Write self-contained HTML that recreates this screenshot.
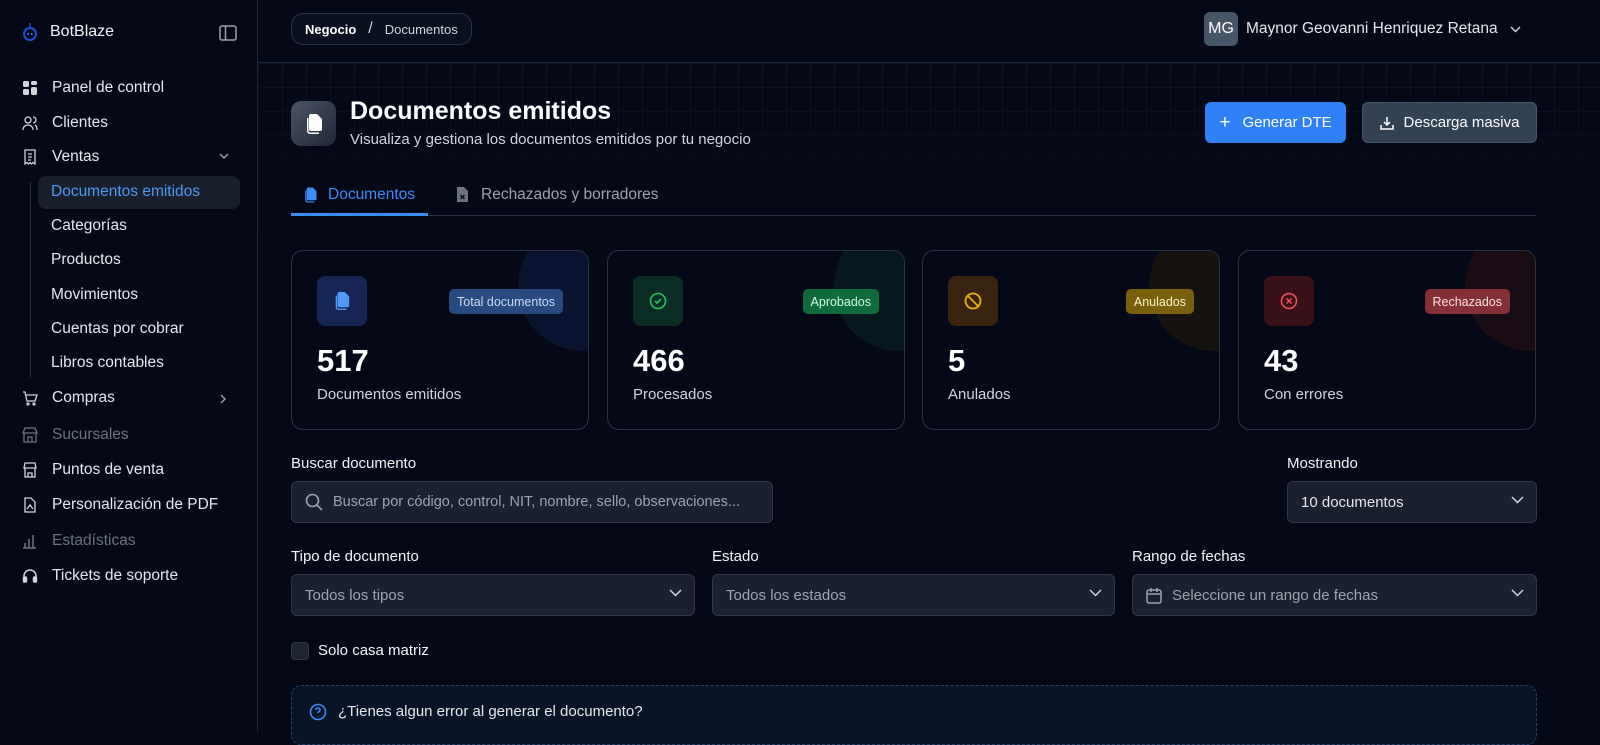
<!DOCTYPE html>
<html><head><meta charset="utf-8"><style>
*{box-sizing:border-box;margin:0;padding:0}
body{width:1600px;height:732px;overflow:hidden;background:#050817;font-family:"Liberation Sans",sans-serif;color:#e5e7eb;position:relative}
.sb{position:absolute;left:0;top:0;width:258px;height:732px;border-right:1px solid #1f2737;background:#050817}
.logo{position:absolute;left:22px;top:22px;display:flex;align-items:center;gap:12px;font-size:16px;color:#f3f4f6}
.nav{position:absolute;left:0;top:70px;width:258px}
.it{position:absolute;left:22px;display:flex;align-items:center;gap:14px;font-size:15.5px;color:#e5e7eb;height:24px}
.it svg{width:16px;height:16px}
.sub{position:absolute;left:51px;font-size:15.5px;color:#e5e7eb}
.dim{color:#6b7280}
.main{position:absolute;left:258px;top:0;right:0;height:732px}
.hdr{height:63px;border-bottom:1px solid #1f2a3d;position:relative}
.grid{position:absolute;left:0;top:63px;right:0;height:180px;background-image:linear-gradient(#0f1526 1px,transparent 1px),linear-gradient(90deg,#0f1526 1px,transparent 1px);background-size:24px 24px;opacity:.9;-webkit-mask-image:linear-gradient(#000,transparent)}
.bc{position:absolute;left:33px;top:13px;height:32px;border:1px solid #2a3346;border-radius:12px;background:#0b1020;padding:0 13px;display:flex;align-items:center;gap:12px;font-size:13px;color:#d1d5db}
.card{position:absolute;top:250px;width:298px;height:180px;border:1px solid #2b3447;border-radius:12px;overflow:hidden;background:#050817}
.card .circ{position:absolute;right:-60px;top:-30px;width:130px;height:130px;border-radius:50%}
.card .ic{position:absolute;left:25px;top:25px;width:50px;height:50px;border-radius:8px;display:flex;align-items:center;justify-content:center}
.card .bd{position:absolute;right:25px;top:38px;height:25px;padding:0 8px;border-radius:5px;font-size:12.5px;display:flex;align-items:center}
.card .n{position:absolute;left:25px;top:92px;font-size:31px;font-weight:bold;color:#fff}
.card .l{position:absolute;left:25px;top:135px;font-size:15px;color:#d1d5db}
.lbl{position:absolute;font-size:15px;color:#f3f4f6}
.inp{position:absolute;height:42px;border:1px solid #2f3748;border-radius:6px;background:#1b2030;font-size:15px;color:#9ca3af;display:flex;align-items:center;padding:0 13px;gap:10px}
.chev{position:absolute;right:12px;top:14px}
</style></head><body>
<div class="sb">
 <div class="logo"><svg width="16" height="20" viewBox="0 0 16 20"><line x1="8" y1="1" x2="8" y2="5" stroke="#1d4ed8" stroke-width="1.5"/><circle cx="8" cy="12" r="6" fill="none" stroke="#1d4ed8" stroke-width="2"/><rect x="5.5" y="11" width="1.5" height="2" fill="#3b82f6"/><rect x="9" y="11" width="1.5" height="2" fill="#3b82f6"/></svg>BotBlaze</div>
 <svg style="position:absolute;left:219px;top:25px" width="18" height="16" viewBox="0 0 18 16"><rect x="1" y="1" width="16" height="14" rx="2" fill="none" stroke="#9ca3af" stroke-width="1.5"/><line x1="6.5" y1="1" x2="6.5" y2="15" stroke="#9ca3af" stroke-width="1.5"/></svg>
 <div class="it" style="top:76px"><svg viewBox="0 0 16 16" fill="#d1d5db"><rect x="1" y="1" width="6" height="6" rx="1.5"/><rect x="9" y="1" width="6" height="4" rx="1.5"/><rect x="1" y="9" width="6" height="6" rx="1.5"/><rect x="9" y="7" width="6" height="8" rx="1.5"/></svg>Panel de control</div>
 <div class="it" style="top:111px"><svg viewBox="0 0 16 16" fill="none" stroke="#d1d5db" stroke-width="1.3"><circle cx="6" cy="5" r="3"/><path d="M1 15c0-3 2-5 5-5s5 2 5 5M11 2a3 3 0 010 6M13 10c1.5.8 2 2.5 2 5"/></svg>Clientes</div>
 <div class="it" style="top:145px"><svg viewBox="0 0 16 16" fill="none" stroke="#d1d5db" stroke-width="1.3"><path d="M3 1h10v14l-2-1.5-1.5 1.5-1.5-1.5-1.5 1.5-1.5-1.5L3 15z"/><path d="M6 5h4M6 8h4M6 11h3"/></svg>Ventas</div>
 <svg style="position:absolute;left:219px;top:153px" width="10" height="7" viewBox="0 0 10 7"><path d="M1 1l4 4 4-4" fill="none" stroke="#9ca3af" stroke-width="1.4"/></svg>
 <div style="position:absolute;left:30px;top:182px;width:1px;height:195px;background:#2b3345"></div>
 <div style="position:absolute;left:38px;top:176px;width:202px;height:33px;background:#1a1f2e;border-radius:8px"></div>
 <div class="sub" style="top:183px;color:#4d9bf7">Documentos emitidos</div>
 <div class="sub" style="top:217px">Categorías</div>
 <div class="sub" style="top:251px">Productos</div>
 <div class="sub" style="top:286px">Movimientos</div>
 <div class="sub" style="top:320px">Cuentas por cobrar</div>
 <div class="sub" style="top:354px">Libros contables</div>
 <div class="it" style="top:386px"><svg viewBox="0 0 16 16" fill="none" stroke="#d1d5db" stroke-width="1.3"><path d="M1 2h2l2 9h8l2-6H4"/><circle cx="6" cy="14" r="1"/><circle cx="12" cy="14" r="1"/></svg>Compras</div>
 <svg style="position:absolute;left:220px;top:394px" width="7" height="10" viewBox="0 0 7 10"><path d="M1 1l4 4-4 4" fill="none" stroke="#9ca3af" stroke-width="1.4"/></svg>
 <div class="it dim" style="top:423px"><svg viewBox="0 0 16 16" fill="none" stroke="#6b7280" stroke-width="1.3"><path d="M1 6l2-5h10l2 5zM2 6v9h12V6M6 15v-5h4v5"/></svg>Sucursales</div>
 <div class="it" style="top:458px"><svg viewBox="0 0 16 16" fill="none" stroke="#d1d5db" stroke-width="1.3"><path d="M2 6l1-5h10l1 5zM3 6v9h10V6"/><path d="M6 15v-4h4v4"/></svg>Puntos de venta</div>
 <div class="it" style="top:493px"><svg viewBox="0 0 16 16" fill="none" stroke="#d1d5db" stroke-width="1.3"><path d="M3 1h6l4 4v10H3z"/><path d="M5 12l3-4 3 4"/></svg>Personalización de PDF</div>
 <div class="it dim" style="top:529px"><svg viewBox="0 0 16 16" fill="none" stroke="#6b7280" stroke-width="1.5"><path d="M3 15V10M7 15V6M11 15V2M14 15h-13"/></svg>Estadísticas</div>
 <div class="it" style="top:564px"><svg viewBox="0 0 16 16" fill="none" stroke="#d1d5db" stroke-width="1.5"><path d="M2 11V8a6 6 0 0112 0v3"/><rect x="1.5" y="9" width="3" height="5" rx="1" fill="#d1d5db"/><rect x="11.5" y="9" width="3" height="5" rx="1" fill="#d1d5db"/></svg>Tickets de soporte</div>
</div>
<div class="main">
 <div class="grid"></div>
 <div class="hdr">
  <div class="bc"><span style="color:#fff;font-weight:bold">Negocio</span><span style="font-size:16px">/</span><span>Documentos</span></div>
  <div style="position:absolute;left:946px;top:12px;width:34px;height:34px;border-radius:6px;background:#475569;color:#fff;font-size:16px;display:flex;align-items:center;justify-content:center">MG</div>
  <div style="position:absolute;left:988px;top:20px;font-size:15.5px;color:#e5e7eb">Maynor Geovanni Henriquez Retana</div>
  <svg style="position:absolute;left:1252px;top:26px" width="11" height="7" viewBox="0 0 11 7"><path d="M1 1l4.5 4.5L10 1" fill="none" stroke="#d1d5db" stroke-width="1.4"/></svg>
 </div>
 <div style="position:absolute;left:33px;top:101px;width:45px;height:45px;border-radius:10px;background:linear-gradient(135deg,#4b5568,#1f2636);display:flex;align-items:center;justify-content:center"><svg width="20" height="22" viewBox="0 0 20 22" fill="#fff"><path d="M7 1h6l5 5v10a2 2 0 01-2 2H7a2 2 0 01-2-2V3a2 2 0 012-2z"/><path d="M3 5v13a3 3 0 003 3h9v-1.5H6A1.5 1.5 0 014.5 18V5z"/></svg></div>
 <div style="position:absolute;left:92px;top:97px;font-size:25px;font-weight:bold;color:#fff">Documentos emitidos</div>
 <div style="position:absolute;left:92px;top:131px;font-size:15px;color:#d1d5db">Visualiza y gestiona los documentos emitidos por tu negocio</div>
 <div style="position:absolute;left:947px;top:102px;width:141px;height:41px;border-radius:6px;background:#2f80f6;color:#fff;font-size:15px;display:flex;align-items:center;justify-content:center;gap:12px"><span style="font-size:19px">+</span>Generar DTE</div>
 <div style="position:absolute;left:1104px;top:102px;width:175px;height:41px;border-radius:6px;background:#334155;border:1px solid #475569;color:#fff;font-size:15px;display:flex;align-items:center;justify-content:center;gap:10px"><svg width="14" height="14" viewBox="0 0 14 14" fill="none" stroke="#fff" stroke-width="1.5"><path d="M7 1v8M4 6l3 3 3-3M1 9v4h12V9"/></svg>Descarga masiva</div>
 <div style="position:absolute;left:33px;top:215px;width:1245px;height:1px;background:#273043"></div>
 <div style="position:absolute;left:33px;top:213px;width:137px;height:3px;background:#3b8cf6"></div>
 <svg style="position:absolute;left:45px;top:186px" width="15" height="18" viewBox="0 0 20 22" fill="#3b8cf6"><path d="M7 1h6l5 5v10a2 2 0 01-2 2H7a2 2 0 01-2-2V3a2 2 0 012-2z"/><path d="M3 5v13a3 3 0 003 3h9v-1.5H6A1.5 1.5 0 014.5 18V5z"/></svg>
 <div style="position:absolute;left:70px;top:186px;font-size:15.5px;color:#3b8cf6">Documentos</div>
 <svg style="position:absolute;left:198px;top:186px" width="13" height="17" viewBox="0 0 13 17"><path d="M1 1h7l4 4v11H1z" fill="#6b7280"/><path d="M4.5 9l4 4M8.5 9l-4 4" stroke="#050817" stroke-width="1.4"/></svg>
 <div style="position:absolute;left:223px;top:186px;font-size:15.5px;color:#9ca3af">Rechazados y borradores</div>

 <div class="card" style="left:33px"><div class="circ" style="background:#0a1430"></div><div class="ic" style="background:#172554"><svg width="18" height="20" viewBox="0 0 20 22" fill="#4d9bf7"><path d="M7 1h6l5 5v10a2 2 0 01-2 2H7a2 2 0 01-2-2V3a2 2 0 012-2z"/><path d="M3 5v13a3 3 0 003 3h9v-1.5H6A1.5 1.5 0 014.5 18V5z"/></svg></div><div class="bd" style="background:#274b7f;color:#c7dbf7">Total documentos</div><div class="n">517</div><div class="l">Documentos emitidos</div></div>
 <div class="card" style="left:349px"><div class="circ" style="background:#07191e"></div><div class="ic" style="background:#0b2c24"><svg width="18" height="18" viewBox="0 0 18 18" fill="none" stroke="#22c55e" stroke-width="1.6"><circle cx="9" cy="9" r="7.5"/><path d="M6 9l2 2 4-4"/></svg></div><div class="bd" style="background:#0f6a3c;color:#d1fae5">Aprobados</div><div class="n">466</div><div class="l">Procesados</div></div>
 <div class="card" style="left:664px"><div class="circ" style="background:#15120f"></div><div class="ic" style="background:#3a2410"><svg width="18" height="18" viewBox="0 0 18 18" fill="none" stroke="#eab308" stroke-width="1.8"><circle cx="9" cy="9" r="7.5"/><path d="M4 4l10 10"/></svg></div><div class="bd" style="background:#7a5f0c;color:#fef3c7">Anulados</div><div class="n">5</div><div class="l">Anulados</div></div>
 <div class="card" style="left:980px"><div class="circ" style="background:#1a0c15"></div><div class="ic" style="background:#3b1119"><svg width="18" height="18" viewBox="0 0 18 18" fill="none" stroke="#f0525b" stroke-width="1.5"><circle cx="9" cy="9" r="7.5"/><path d="M6.5 6.5l5 5M11.5 6.5l-5 5"/></svg></div><div class="bd" style="background:#843036;color:#fde2e2">Rechazados</div><div class="n">43</div><div class="l">Con errores</div></div>

 <div class="lbl" style="left:33px;top:455px">Buscar documento</div>
 <div class="inp" style="left:33px;top:481px;width:482px"><svg width="18" height="18" viewBox="0 0 18 18" fill="none" stroke="#9ca3af" stroke-width="1.6"><circle cx="7.5" cy="7.5" r="6"/><path d="M12 12l5 5"/></svg><span style="font-size:14.5px">Buscar por código, control, NIT, nombre, sello, observaciones...</span></div>
 <div class="lbl" style="left:1029px;top:455px">Mostrando</div>
 <div class="inp" style="left:1029px;top:481px;width:250px;color:#e5e7eb">10 documentos<svg class="chev" width="13" height="8" viewBox="0 0 13 8"><path d="M1 1l5.5 5.5L12 1" fill="none" stroke="#d1d5db" stroke-width="1.5"/></svg></div>
 <div class="lbl" style="left:33px;top:548px">Tipo de documento</div>
 <div class="inp" style="left:33px;top:574px;width:404px">Todos los tipos<svg class="chev" width="13" height="8" viewBox="0 0 13 8"><path d="M1 1l5.5 5.5L12 1" fill="none" stroke="#d1d5db" stroke-width="1.5"/></svg></div>
 <div class="lbl" style="left:454px;top:548px">Estado</div>
 <div class="inp" style="left:454px;top:574px;width:403px">Todos los estados<svg class="chev" width="13" height="8" viewBox="0 0 13 8"><path d="M1 1l5.5 5.5L12 1" fill="none" stroke="#d1d5db" stroke-width="1.5"/></svg></div>
 <div class="lbl" style="left:874px;top:548px">Rango de fechas</div>
 <div class="inp" style="left:874px;top:574px;width:405px"><svg width="16" height="17" viewBox="0 0 16 17" fill="none" stroke="#9ca3af" stroke-width="1.5"><rect x="1" y="3" width="14" height="13" rx="2"/><path d="M1 7h14M5 1v4M11 1v4"/></svg>Seleccione un rango de fechas<svg class="chev" width="13" height="8" viewBox="0 0 13 8"><path d="M1 1l5.5 5.5L12 1" fill="none" stroke="#d1d5db" stroke-width="1.5"/></svg></div>
 <div style="position:absolute;left:33px;top:642px;width:18px;height:18px;border-radius:4px;background:#1f2433;border:1px solid #2f3748"></div>
 <div class="lbl" style="left:60px;top:642px">Solo casa matriz</div>
 <div style="position:absolute;left:33px;top:685px;width:1246px;height:60px;border:1px dashed #24406a;border-radius:10px;background:#0a1429"></div>
 <svg style="position:absolute;left:51px;top:703px" width="18" height="18" viewBox="0 0 18 18" fill="none" stroke="#3b8cf6" stroke-width="1.6"><circle cx="9" cy="9" r="7.5"/><path d="M7 7a2 2 0 114 0c0 1.5-2 1.5-2 3M9 13v.5"/></svg>
 <div style="position:absolute;left:80px;top:703px;font-size:15px;color:#e5e7eb">¿Tienes algun error al generar el documento?</div>
</div>
</body></html>
